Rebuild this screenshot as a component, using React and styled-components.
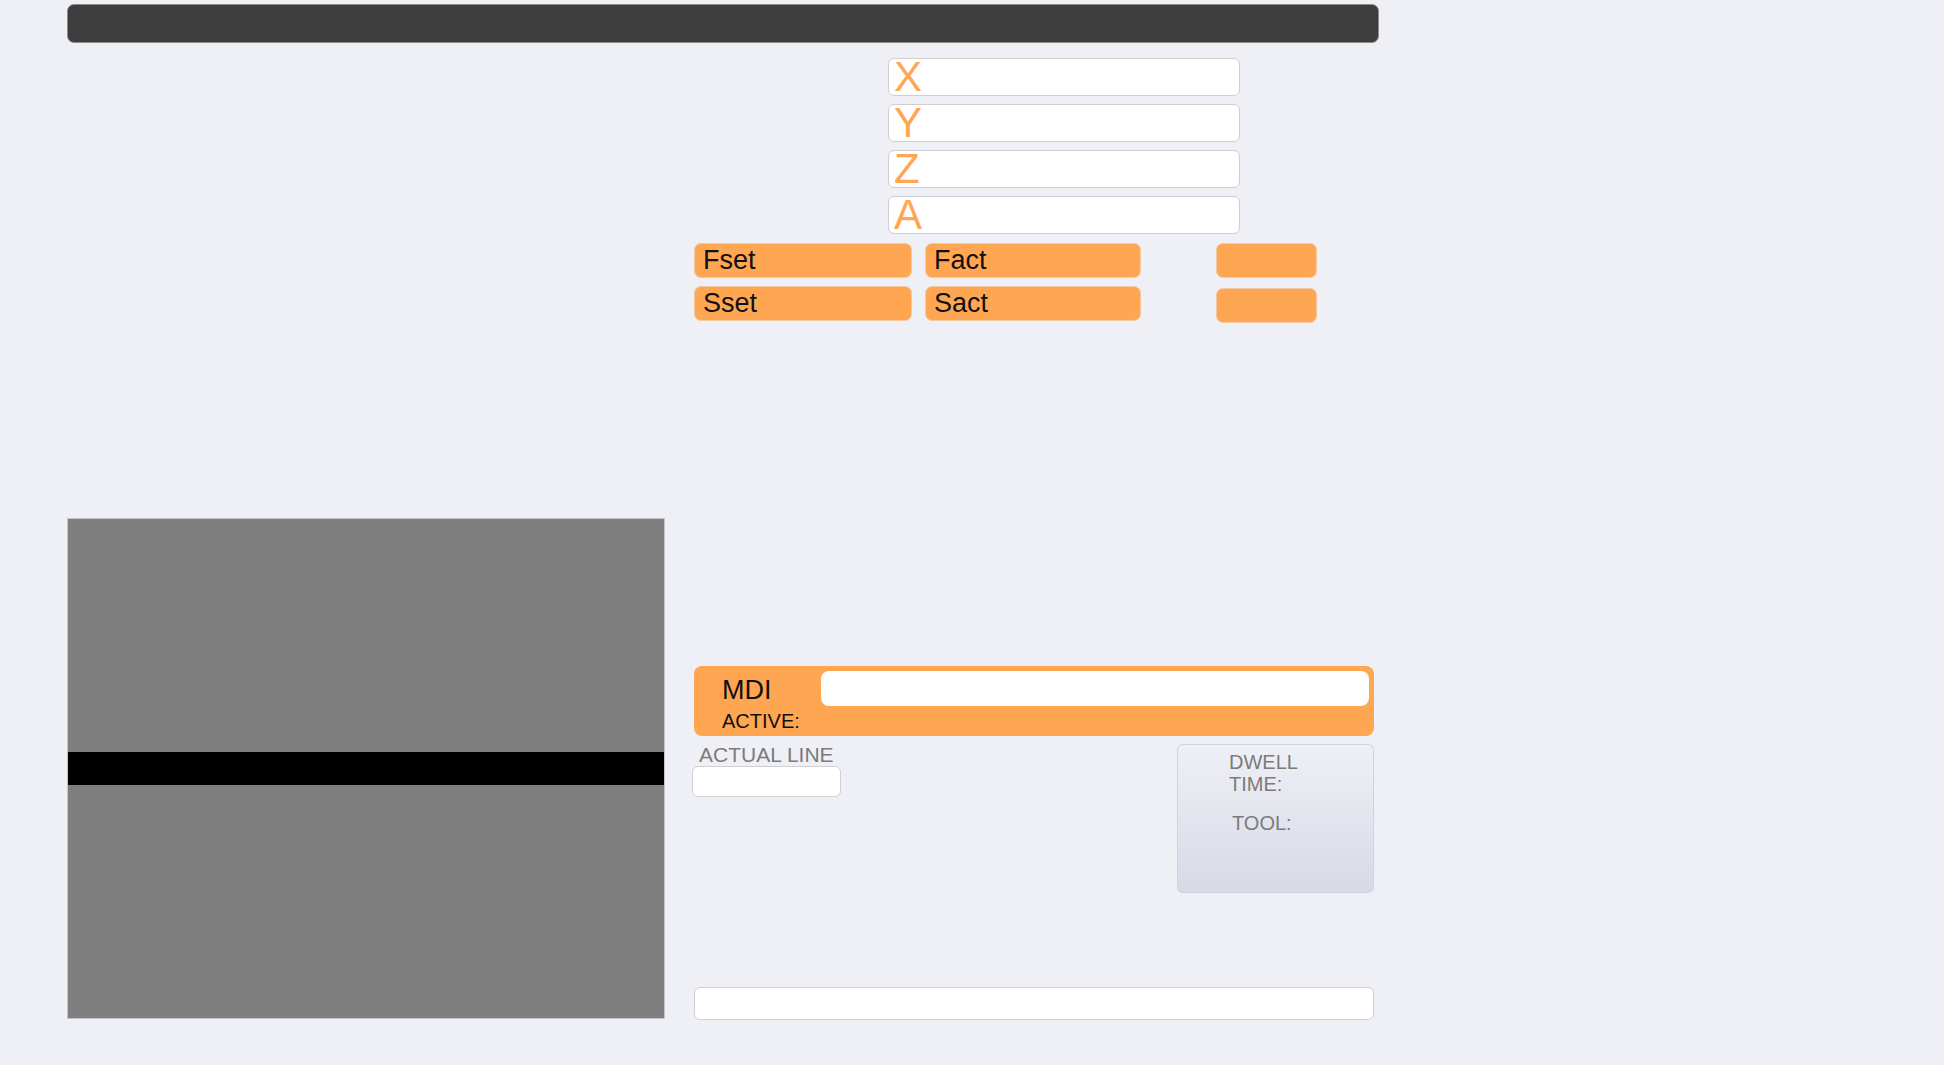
import React from 'react';
import styled, { createGlobalStyle } from 'styled-components';

const GlobalStyle = createGlobalStyle`
  html, body {
    margin: 0;
    padding: 0;
    background: #eff0f5;
  }
  body {
    font-family: "Liberation Sans", Arial, sans-serif;
  }
  * {
    box-sizing: border-box;
  }
`;

const orange = '#ffa652';

const Page = styled.div`
  width: 1944px;
  min-height: 1065px;
  padding: 4px 0 0 67px;
`;

const TopBar = styled.div`
  width: 1312px;
  height: 39px;
  background: #3d3d3d;
  border: 1px solid #8c8c8c;
  border-radius: 7px;
`;

const Main = styled.div`
  display: flex;
  align-items: flex-start;
  gap: 29px;
`;

const LeftCol = styled.div`
  width: 598px;
  padding-top: 475px;
`;

const Preview = styled.div`
  height: 501px;
  display: flex;
  flex-direction: column;
  background: #7f7f7f;
  border: 1px solid #c4c6cc;
`;

const PreviewArea = styled.div`
  flex: ${p => (p.$top ? '0 0 233px' : '1')};
`;

const ScrubBar = styled.div`
  height: 33px;
  background: #000;
`;

const RightCol = styled.div`
  width: 680px;
  display: flex;
  flex-direction: column;
`;

const AxisList = styled.div`
  display: flex;
  flex-direction: column;
  gap: 8px;
  padding-top: 15px;
  margin-left: 194px;
`;

const AxisBox = styled.div`
  width: 352px;
  height: 38px;
  display: flex;
  align-items: center;
  padding-left: 5px;
  background: #fff;
  border: 1px solid #cfcfd4;
  border-radius: 6px;
  color: ${orange};
  font-size: 42px;
  line-height: 1;
`;

const FeedRows = styled.div`
  display: flex;
  flex-direction: column;
  gap: 8px;
  margin-top: 9px;
`;

const FeedRow = styled.div`
  display: flex;
  align-items: flex-start;
  gap: 13px;
`;

const Pill = styled.div`
  width: ${p => p.$w}px;
  height: 35px;
  display: flex;
  align-items: center;
  padding-left: 8px;
  margin-left: ${p => p.$ml || 0}px;
  margin-top: ${p => p.$mt || 0}px;
  background: ${orange};
  border: 1px solid #f2c9a0;
  border-radius: 7px;
  color: #111;
  font-size: 27px;
`;

const MdiPanel = styled.div`
  margin-top: 343px;
  height: 70px;
  display: flex;
  background: ${orange};
  border-radius: 8px;
  padding: 5px 5px 0 0;
`;

const MdiLabels = styled.div`
  width: 127px;
  padding: 4px 0 0 28px;
  display: flex;
  flex-direction: column;
  gap: 4px;
  color: #111;
`;

const MdiTitle = styled.span`
  font-size: 27px;
  line-height: 31px;
`;

const MdiActive = styled.span`
  font-size: 20px;
  line-height: 23px;
`;

const MdiInput = styled.div`
  flex: 1;
  height: 35px;
  background: #fff;
  border-radius: 8px;
`;

const InfoRow = styled.div`
  display: flex;
  justify-content: space-between;
  align-items: flex-start;
  margin-top: 8px;
`;

const LineGroup = styled.div`
  display: flex;
  flex-direction: column;
`;

const GrayLabel = styled.span`
  font-size: 20px;
  line-height: 22px;
  color: #7b7b7b;
`;

const LineLabel = styled(GrayLabel)`
  font-size: 21px;
  padding-left: 5px;
`;

const LineBox = styled.div`
  width: 149px;
  height: 31px;
  margin-left: -2px;
  background: #fff;
  border: 1px solid #cfcfd4;
  border-radius: 6px;
`;

const DwellPanel = styled.div`
  width: 197px;
  height: 149px;
  padding: 6px 0 0 51px;
  display: flex;
  flex-direction: column;
  background: linear-gradient(#eff0f6, #d7d9e5);
  border: 1px solid #d2d3da;
  border-radius: 6px;
`;

const ToolLabel = styled(GrayLabel)`
  margin-top: 17px;
  padding-left: 3px;
`;

const StatusInput = styled.div`
  margin-top: 94px;
  height: 33px;
  background: #fff;
  border: 1px solid #cfcfd4;
  border-radius: 6px;
`;

const axes = ['X', 'Y', 'Z', 'A'];

export default function App() {
  return (
    <>
      <GlobalStyle />
      <Page>
        <TopBar />
        <Main>
          <LeftCol>
            <Preview>
              <PreviewArea $top />
              <ScrubBar />
              <PreviewArea />
            </Preview>
          </LeftCol>
          <RightCol>
            <AxisList>
              {axes.map(a => (
                <AxisBox key={a}>{a}</AxisBox>
              ))}
            </AxisList>
            <FeedRows>
              <FeedRow>
                <Pill $w={218}>Fset</Pill>
                <Pill $w={216}>Fact</Pill>
                <Pill $w={101} $ml={62} />
              </FeedRow>
              <FeedRow>
                <Pill $w={218}>Sset</Pill>
                <Pill $w={216}>Sact</Pill>
                <Pill $w={101} $ml={62} $mt={2} />
              </FeedRow>
            </FeedRows>
            <MdiPanel>
              <MdiLabels>
                <MdiTitle>MDI</MdiTitle>
                <MdiActive>ACTIVE:</MdiActive>
              </MdiLabels>
              <MdiInput />
            </MdiPanel>
            <InfoRow>
              <LineGroup>
                <LineLabel>ACTUAL LINE</LineLabel>
                <LineBox />
              </LineGroup>
              <DwellPanel>
                <GrayLabel>DWELL<br />TIME:</GrayLabel>
                <ToolLabel>TOOL:</ToolLabel>
              </DwellPanel>
            </InfoRow>
            <StatusInput />
          </RightCol>
        </Main>
      </Page>
    </>
  );
}
